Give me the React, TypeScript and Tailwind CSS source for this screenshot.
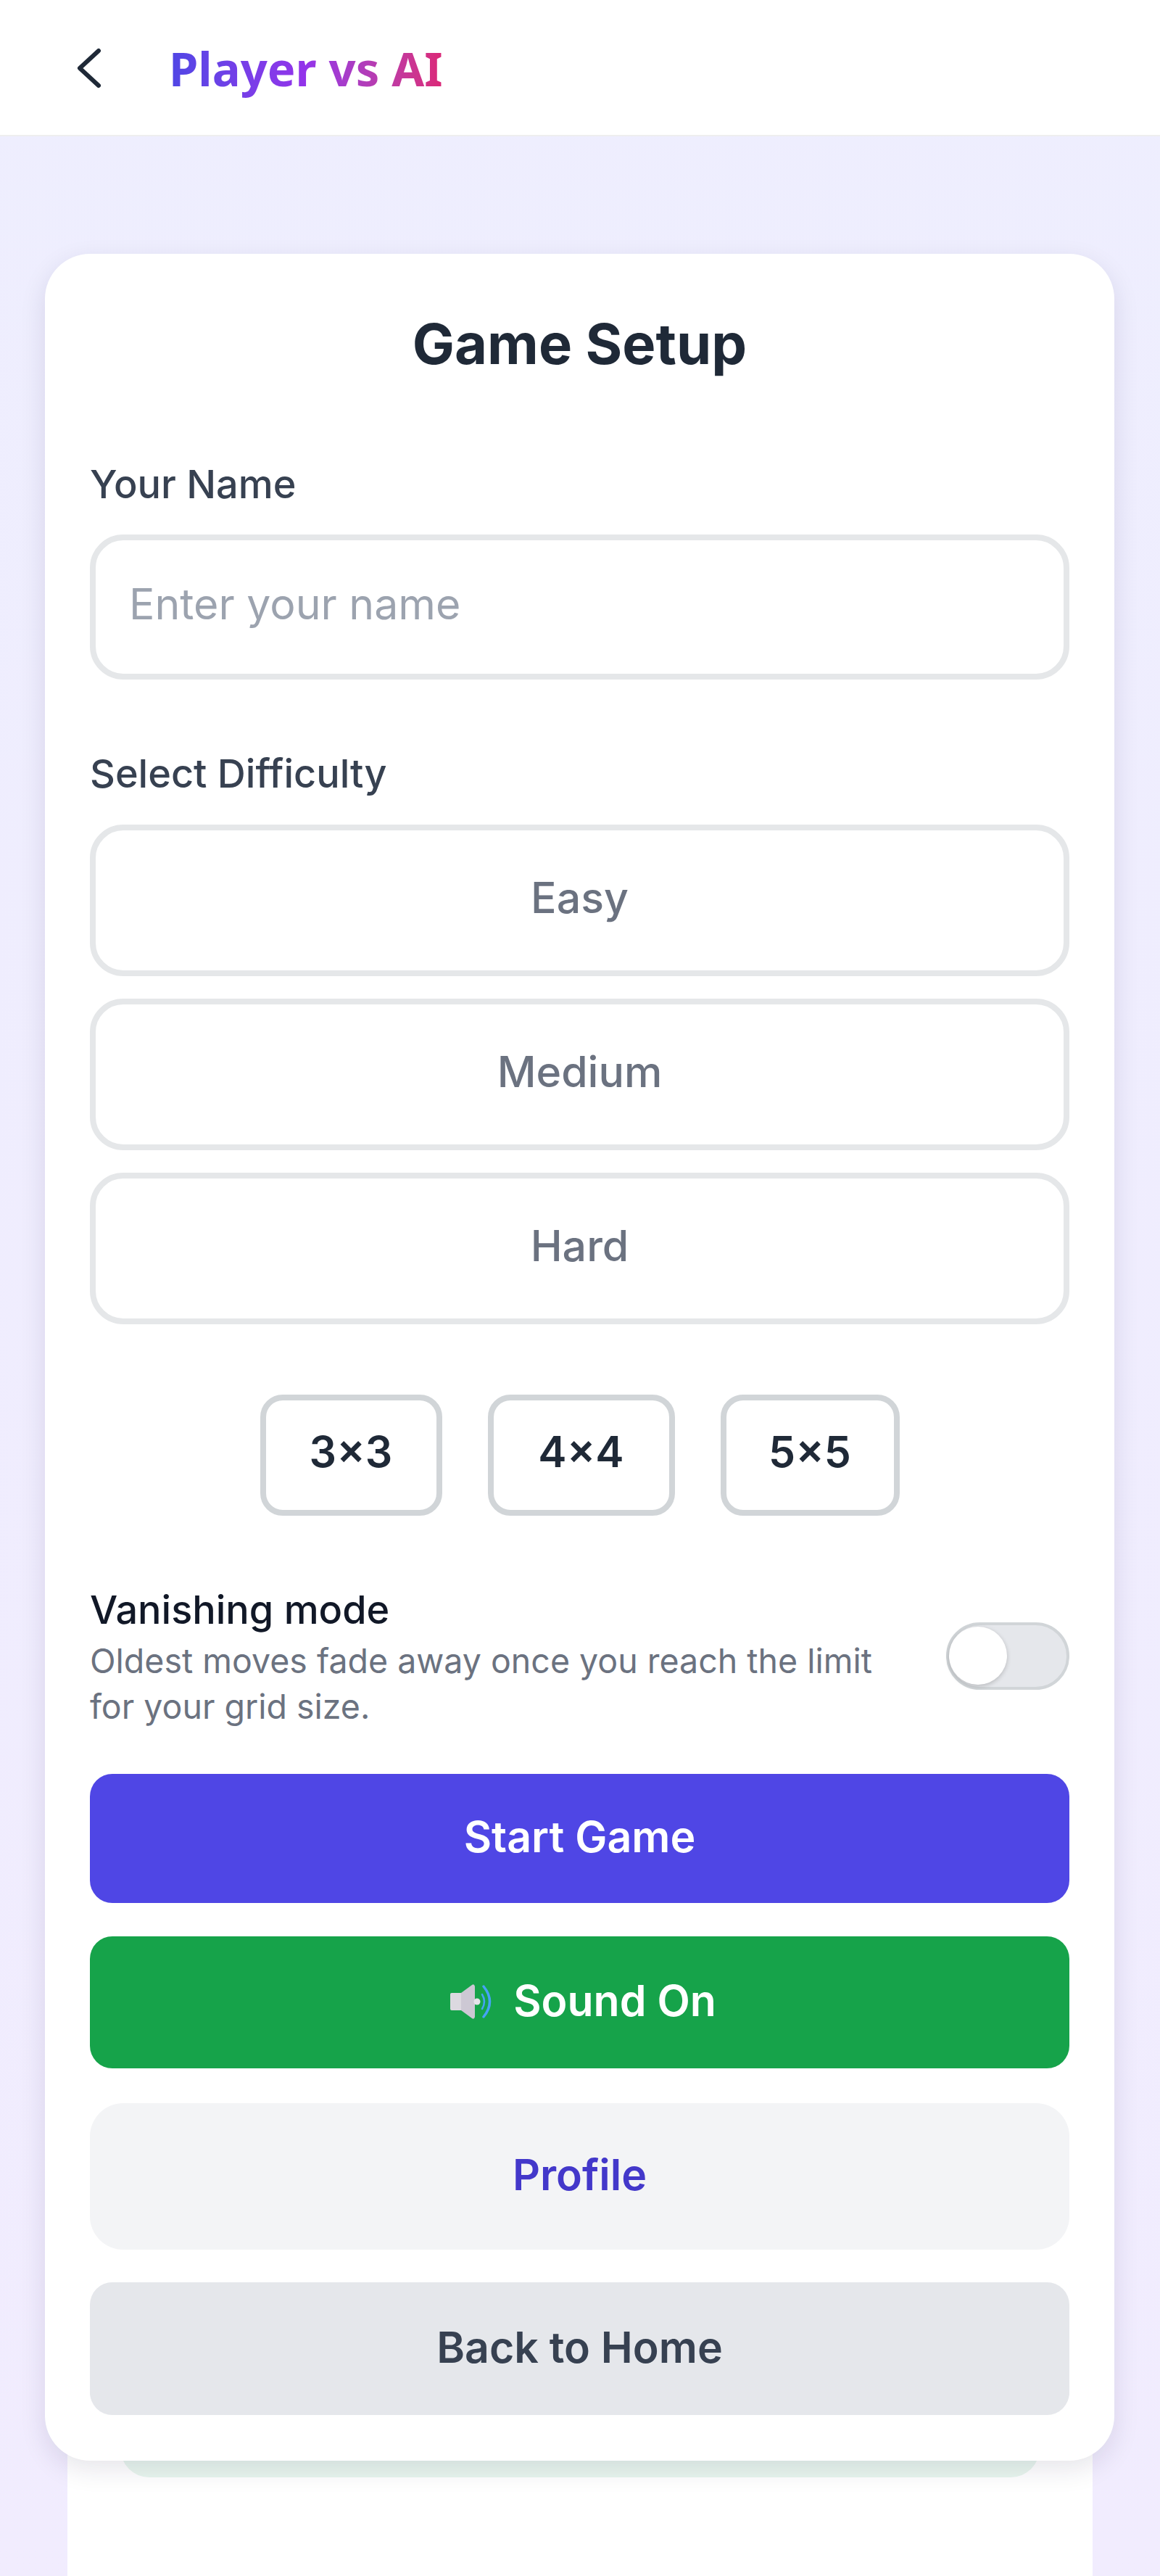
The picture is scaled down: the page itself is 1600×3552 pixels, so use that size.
const font = { fontFamily: "Inter, 'Liberation Sans', sans-serif" };

function ChoiceButton({ label }: { label: string }) {
  return (
    <button className="h-[209px] w-full rounded-[46px] border-[8px] border-[#e5e7e9] bg-white pb-[7px] text-[59px] font-medium text-[#6b7280]">
      {label}
    </button>
  );
}

function SizeButton({ label, width }: { label: string; width: string }) {
  return (
    <button className={"h-[167px] rounded-[31px] border-[8px] border-[#d1d5d8] bg-white pb-[8px] text-[59px] font-semibold text-[#1f2937] " + width}>
      {label}
    </button>
  );
}

function SpeakerIcon() {
  return (
    <svg width="60" height="50" viewBox="0 0 60 50" fill="none">
      <path d="M3 13h13v24H3a2 2 0 0 1-2-2V15a2 2 0 0 1 2-2z" fill="#dcd9e0" />
      <path d="M16 13 L31 2 q3-2 4 2 V46 q-1 4-4 2 L16 37z" fill="#cdc8d4" />
      <circle cx="38" cy="25" r="4.5" fill="#e6e3ea" />
      <path d="M45 15q6 10 0 20" stroke="#45a3f5" strokeWidth="2.5" strokeLinecap="round" />
      <path d="M47 4q17 21 0 42" stroke="#45a3f5" strokeWidth="3.5" strokeLinecap="round" />
    </svg>
  );
}

export default function App() {
  return (
    <div className="h-[3552px] overflow-hidden bg-linear-to-b from-[#eeeefe] to-[#f1ecfe]" style={font}>
      <header className="flex h-[188px] items-center border-b-[2px] border-[#eeeeef] bg-white pl-[104px]">
        <svg width="36" height="56" viewBox="0 0 36 56" fill="none" className="mt-[2px]">
          <path d="M32 4 L6 28 L32 52" stroke="#1f2937" strokeWidth="6" strokeLinecap="round" strokeLinejoin="round" />
        </svg>
        <h1
          className="mt-[3px] ml-[93px] bg-linear-to-r from-[#4f46e5] via-[#9333ea] to-[#db2777] bg-clip-text text-[65px] font-bold text-transparent"
          style={{ fontFamily: "'Noto Sans', sans-serif" }}
        >
          Player vs AI
        </h1>
      </header>

      <main className="relative z-10 mr-[63px] ml-[62px] mt-[162px] h-[3043px] rounded-[62px] bg-white px-[62px] pt-[62px] shadow-[0_12px_36px_rgba(30,20,60,0.11)]">
        <h2 className="text-center text-[77.6px] leading-[124px] font-bold text-[#1f2937]">Game Setup</h2>

        <label className="mt-[93px] block text-[54px] leading-[78px] font-medium text-[#374151]">Your Name</label>
        <div className="mt-[30px] flex h-[200px] items-center rounded-[46px] border-[8px] border-[#e5e7e9] pb-[8px] pl-[46px] text-[59px] text-[#9ca3af]">
          Enter your name
        </div>

        <label className="mt-[91px] block text-[54px] leading-[78px] font-medium text-[#374151]">Select Difficulty</label>
        <div className="mt-[31px] flex flex-col gap-[31px]">
          <ChoiceButton label="Easy" />
          <ChoiceButton label="Medium" />
          <ChoiceButton label="Hard" />
        </div>

        <div className="mt-[97px] flex justify-center gap-[63px]">
          <SizeButton label="3×3" width="w-[251px]" />
          <SizeButton label="4×4" width="w-[258px]" />
          <SizeButton label="5×5" width="w-[247px]" />
        </div>

        <div className="mt-[91px] flex items-center justify-between">
          <div className="w-[1130px]">
            <div className="text-[54px] leading-[78px] font-medium text-[#111827]">Vanishing mode</div>
            <div className="text-[46.5px] leading-[63px] text-[#6b7280]">
              Oldest moves fade away once you reach the limit for your grid size.
            </div>
          </div>
          <div className="flex h-[93px] w-[170px] items-center rounded-full border-[4px] border-[#d1d5d8] bg-[#e5e7eb]">
            <div className="h-[80px] w-[80px] rounded-full bg-white shadow-[0_2px_6px_rgba(0,0,0,0.2)]" />
          </div>
        </div>

        <button className="mt-[61px] block h-[178px] w-full rounded-[31px] bg-[#4f46e5] pb-[3px] text-[59px] font-semibold text-white">
          Start Game
        </button>
        <button className="mt-[46px] flex h-[182px] w-full items-center justify-center gap-[28px] rounded-[31px] bg-[#16a34a] pb-[3px] pl-[9px] text-[59px] font-semibold text-white">
          <SpeakerIcon />
          Sound On
        </button>
        <button className="mt-[48px] block h-[202px] w-full rounded-[46px] bg-[#f3f4f6] pb-[4px] text-[59px] font-semibold text-[#4338ca]">
          Profile
        </button>
        <button className="mt-[45px] block h-[183px] w-full rounded-[31px] bg-[#e5e7eb] pb-[3px] text-[59px] font-semibold text-[#374151]">
          Back to Home
        </button>
      </main>

      <section className="mx-[93px] mt-[-40px] h-[210px] bg-white">
        <div className="mx-[73px] h-[63px] rounded-b-[40px] bg-[#e8f6ee]" />
      </section>
    </div>
  );
}
